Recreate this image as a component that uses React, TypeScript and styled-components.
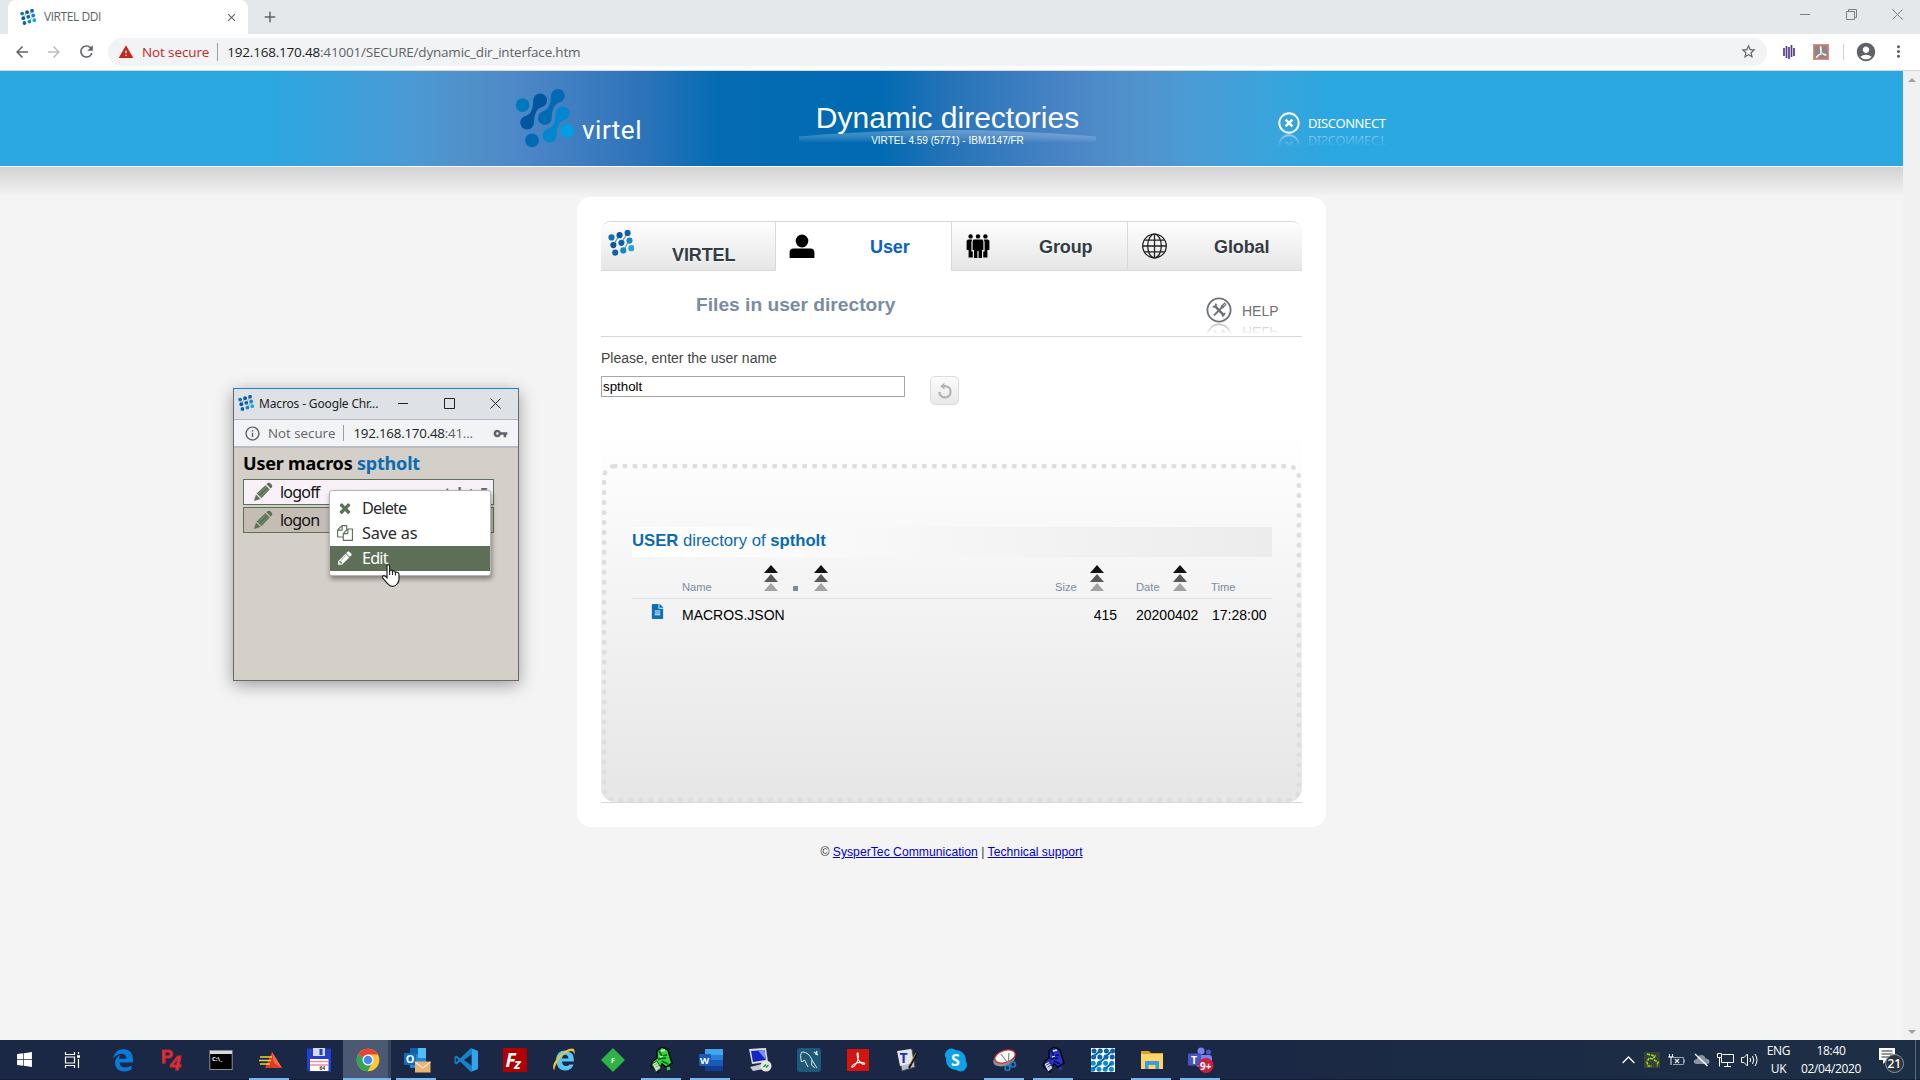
import React from "react";
import styled, { createGlobalStyle, css } from "styled-components";
import {
  MdArrowBack,
  MdArrowForward,
  MdRefresh,
  MdStarBorder,
  MdVpnKey,
  MdMoreVert,
  MdWarning,
  MdInfoOutline,
  MdAccountCircle,
  MdClose,
  MdAdd,
} from "react-icons/md";
import { FaFileAlt, FaWindows } from "react-icons/fa";

const sans = `"Liberation Sans", Arial, sans-serif`;
const ui = `"Open Sans", "Noto Sans", sans-serif`;
const noto = `"Noto Sans", "Open Sans", sans-serif`;

const GlobalStyle = createGlobalStyle`
  * { box-sizing: border-box; }
  body { margin: 0; background: #f5f5f5; font-family: ${sans}; overflow: hidden; }
  svg { display: block; flex: none; }
`;

const Screen = styled.div`
  position: relative;
  display: flex;
  flex-direction: column;
  width: 1920px;
  height: 1080px;
  overflow: hidden;
`;

/* ---------- Shared logo ---------- */

function Link({ x, y, fill }: { x: number; y: number; fill: string }) {
  return (
    <g fill={fill} transform={`translate(${x} ${y})`}>
      <circle r="7" />
      <circle cx="13.3" cy="-22.5" r="7" />
      <path d="M-1 -6.9 Q6 -9 6.3 -22.5 L14 -15.6 Q7 -13 7 0.5 Z" />
    </g>
  );
}

function VirtelMark({ size }: { size: number }) {
  return (
    <svg width={size} height={size} viewBox="15 8 61 61">
      <circle cx="22.7" cy="25.3" r="7" fill="#0078be" />
      <Link x={27.3} y={43.2} fill="#0057a0" />
      <Link x={45.3} y={38.5} fill="#006ab3" />
      <Link x={50.2} y={56.3} fill="#0087cf" />
      <circle cx="32.3" cy="61.3" r="7" fill="#006ab3" />
      <circle cx="68" cy="51.7" r="7" fill="#009ee3" />
    </svg>
  );
}

function DotMark({ size }: { size: number }) {
  const colors = ["#0a74bb", "#0a56a0", "#0c62ad", "#0a56a0", "#0c62ad", "#1785cc", "#0c62ad", "#1785cc", "#22a1e4"];
  return (
    <svg width={size} height={size} viewBox="13 6 62 63">
      <path d="M26 42L40 18M45 37L60 13M50 55L64 31" stroke="#5a9fd6" strokeWidth="3" />
      {colors.map((c, i) => {
        const col = i % 3;
        const row = Math.floor(i / 3);
        return (
          <ellipse key={i} cx={21 + col * 19.5 + row * 4.5} cy={24 - col * 5.5 + row * 18.5} rx="7.4" ry="7.6" fill={c} />
        );
      })}
    </svg>
  );
}

/* ---------- Browser chrome ---------- */

const TabStrip = styled.div`
  display: flex;
  align-items: flex-end;
  height: 34px;
  padding-left: 8px;
  background: #e4e8eb;
`;

const BrowserTab = styled.div`
  display: flex;
  align-items: center;
  width: 240px;
  height: 34px;
  padding: 0 10px 0 12px;
  border-radius: 8px 8px 0 0;
  background: #fff;
  color: #5f6368;
  font: 12px/34px ${ui};
  letter-spacing: -0.45px;
  span { flex: 1; padding-left: 8px; }
`;

const NewTab = styled.div`
  display: flex;
  align-items: center;
  height: 34px;
  margin-left: 13px;
  color: #5f6368;
`;

const WindowButtons = styled.div`
  display: flex;
  align-items: center;
  gap: 35px;
  height: 28px;
  margin-left: auto;
  margin-bottom: 6px;
  padding-right: 17px;
`;

const Toolbar = styled.div`
  display: flex;
  align-items: center;
  height: 37px;
  padding: 0 12px 1px 13px;
  border-bottom: 1px solid #d5d8dc;
  background: #fff;
  color: #5f6368;
`;

const NavButtons = styled.div`
  display: flex;
  align-items: center;
  gap: 14px;
  width: 95px;
  svg:nth-child(2) { color: #bbbdc0; }
`;

const Omnibox = styled.div`
  display: flex;
  align-items: center;
  width: 1659px;
  height: 28px;
  padding: 0 10px;
  border-radius: 14px;
  background: #f1f3f4;
  font: 13.5px/28px ${ui};
`;

const NotSecure = styled.span`
  margin-left: 8px;
  color: #c5281c;
  letter-spacing: -0.12px;
`;

const Divider = styled.i<{ $h?: number; $c?: string }>`
  width: 1px;
  height: ${(p) => p.$h ?? 18}px;
  background: ${(p) => p.$c ?? "#9a9da1"};
`;

const Url = styled.span<{ $gap?: number }>`
  flex: 1;
  margin-left: ${(p) => p.$gap ?? 9}px;
  color: #5f6368;
  letter-spacing: -0.2px;
  b { font-weight: 400; color: #202124; }
`;

const Extensions = styled.div`
  display: flex;
  align-items: center;
  margin-left: auto;
`;

const Spacer = styled.i<{ $w: number }>`
  width: ${(p) => p.$w}px;
  flex: none;
`;

/* ---------- Page ---------- */

const Viewport = styled.div`
  display: flex;
  height: 969px;
`;

const Page = styled.main`
  display: flex;
  flex-direction: column;
  align-items: flex-start;
  width: 1903px;
  background: #f4f4f4;
`;

const Scrollbar = styled.div`
  display: flex;
  flex-direction: column;
  justify-content: space-between;
  align-items: center;
  width: 17px;
  padding: 7px 0 6px;
  background: #f1f1f1;
`;

const Arrow = styled.i<{ $down?: boolean }>`
  border: 4px solid transparent;
  ${(p) =>
    p.$down
      ? css`border-top-color: #a0a0a0; border-bottom: 0;`
      : css`border-bottom-color: #a0a0a0; border-top: 0;`}
`;

const Banner = styled.header`
  display: flex;
  align-items: flex-start;
  width: 100%;
  height: 96px;
  padding-left: 515px;
  border-bottom: 1px solid #fff;
  background: linear-gradient(90deg, #2ba7e1 0, #2ba7e1 270px, #4b9ad5 410px, #5090c9 470px, #4d87c7 520px,
    #2e73ba 640px, #056cb3 715px, #016ab2 880px, #2673b8 950px, #4a85c6 1070px, #5191cb 1130px, #4b9bd5 1190px,
    #3aa4dc 1270px, #2ba7e1 1330px);
`;

const Logo = styled.div`
  display: flex;
  width: 284px;
  padding-top: 17px;
  svg { margin-right: 7px; }
  span {
    padding-top: 27px;
    color: #fff;
    font: 400 26px/30px Roboto, sans-serif;
    letter-spacing: 0.5px;
  }
`;

const TitleBlock = styled.div`
  position: relative;
  width: 297px;
  padding-top: 29px;
  color: #fff;
  text-align: center;
  svg { position: absolute; left: 0; top: 59px; }
`;

const Title = styled.h1`
  position: relative;
  margin: 0;
  font: 30px/35px ${sans};
`;

const SubTitle = styled.div`
  position: relative;
  font: 10px/12px ${sans};
`;

const ActionLink = styled.div<{ $c: string; $h: number }>`
  display: flex;
  align-items: center;
  height: ${(p) => p.$h}px;
  color: ${(p) => p.$c};
`;

const Reflected = styled.div<{ $h: number }>`
  display: flex;
  align-items: flex-end;
  height: ${(p) => p.$h}px;
  overflow: hidden;
  transform: scaleY(-1);
  opacity: 0.45;
  mask-image: linear-gradient(0deg, #000 0%, transparent 90%);
  ${ActionLink} span { padding-top: 8px; }
`;

const Disconnect = styled.div`
  margin-left: 182px;
  padding-top: 41px;
  span {
    margin-left: 8px;
    font: 13px/22px ${noto};
    letter-spacing: -0.4px;
  }
`;

const Shade = styled.div`
  width: 100%;
  height: 30px;
  background: linear-gradient(#d3d3d3, #dedede 35%, #f4f4f4);
`;

const Card = styled.section`
  display: flex;
  flex-direction: column;
  width: 749px;
  height: 630px;
  margin-left: 577px;
  padding: 24px 24px 0;
  border-radius: 14px;
  background: #fff;
`;

const Tabs = styled.nav`
  display: grid;
  grid-template-columns: 175px 176px 176px 174px;
  height: 50px;
  border-top: 1px solid #d9d9d9;
  border-radius: 10px 10px 0 0;
  overflow: hidden;
`;

const Tab = styled.div<{ $active?: boolean; $pad: number; $gap: number; $drop?: number }>`
  display: flex;
  padding-left: ${(p) => p.$pad}px;
  border-bottom: 1px solid #d9d9d9;
  border-right: 1px solid #d9d9d9;
  background: linear-gradient(#fefefe, #e6e6e6);
  color: #333b44;
  &:last-child { border-right: 0; }
  ${(p) => p.$active && css`background: #fff; border-bottom-color: #fff; color: #0a62c9;`}
  svg { margin-top: ${(p) => (p.$drop ? 8 : 11)}px; }
  span {
    margin-left: ${(p) => p.$gap}px;
    padding-top: ${(p) => 15 + (p.$drop ?? 0)}px;
    font: bold 18px/20px ${sans};
    letter-spacing: -0.1px;
    text-shadow: 0 1px 0 #fff;
  }
`;

const Heading = styled.div`
  display: flex;
  height: 66px;
  border-bottom: 1px solid #d9d9d9;
`;

const HeadingText = styled.h2`
  width: 605px;
  margin: 0;
  padding: 21px 0 0 95px;
  color: #7a8ca3;
  font: bold 19.2px/25px ${sans};
`;

const Help = styled.div`
  padding-top: 26px;
  span {
    margin-left: 10px;
    font: 14px/26px ${sans};
    padding-top: 2px;
  }
`;

const Form = styled.div`
  display: flex;
  height: 93px;
  padding-top: 12px;
`;

const FieldColumn = styled.label`
  display: flex;
  flex-direction: column;
  width: 304px;
  color: #444;
  font: 14px/18px ${sans};
`;

const Field = styled.div`
  height: 21px;
  margin-top: 9px;
  padding-left: 1px;
  border: 1px solid #a6a6a6;
  background: #fff;
  color: #000;
  font: 13.33px/19px ${sans};
`;

const RefreshButton = styled.div`
  display: flex;
  align-items: center;
  justify-content: center;
  width: 29px;
  height: 29px;
  margin: 27px 0 0 25px;
  border: 1px solid #dcdcdc;
  border-radius: 5px;
  background: linear-gradient(#fcfcfc, #e8e8e8);
`;

const Panel = styled.div`
  border-bottom: 1px solid #d9d9d9;
`;

const PanelFill = styled.div`
  display: flex;
  flex-direction: column;
  height: 372px;
  border-radius: 0 0 14px 14px;
  background: linear-gradient(#fff, #fdfdfd 8%, #e6e6e6);
`;

const Dotted = styled.div`
  width: 699px;
  height: 338px;
  margin: 34px 0 0 1px;
  padding: 58px 24px 0 25px;
  border: 5px dotted #dedede;
  border-radius: 13px;
`;

const DirectoryTitle = styled.h3`
  margin: 0;
  height: 30px;
  background: linear-gradient(90deg, #fff, #ececec);
  color: #0b6ab0;
  font: 16.7px/28px ${sans};
`;

const FileGrid = styled.div`
  display: grid;
  grid-template-columns: 50px 82px 28px 263px 35px 46px 37px 38px 1fr;
  align-items: end;
  height: 42px;
  padding-bottom: 4px;
  border-bottom: 1px solid #e2e2e2;
  color: #7a8ca3;
  font: 11.2px/14px ${sans};
`;

const FileRow = styled.div`
  display: grid;
  grid-template-columns: 19px 31px 396px 39px 19px 75px 1fr;
  height: 34px;
  color: #000;
  font: 14px/33px ${sans};
  svg { margin: 5px 0 0 -1px; color: #0a70ba; }
  span:nth-child(4) { text-align: right; }
  span:nth-child(7) { padding-left: 1px; }
`;

const SortStack = styled.div`
  display: flex;
  flex-direction: column;
  gap: 1px;
  margin-bottom: 3px;
  i {
    width: 14px;
    height: 8px;
    clip-path: polygon(50% 0, 100% 100%, 0 100%);
    background: #111;
  }
  i:nth-child(2) { background: #595959; }
  i:nth-child(3) { background: #a3a3a3; }
`;

const Dot = styled.i`
  width: 5px;
  height: 5px;
  margin-bottom: 3px;
  background: #7a8ca3;
`;

const DotCell = styled.div`
  display: flex;
  align-items: flex-end;
  gap: 16px;
  padding-left: 1px;
`;

const Footer = styled.footer`
  width: 1903px;
  padding: 17px 0 0 0;
  color: #333;
  font: 12.16px/16px ${sans};
  letter-spacing: 0.02px;
  text-align: center;
  a { color: #0000d8; text-decoration: underline; }
`;

/* ---------- Popup window ---------- */

const Popup = styled.aside`
  position: absolute;
  left: 233px;
  top: 388px;
  width: 286px;
  height: 293px;
  display: flex;
  flex-direction: column;
  border: 1px solid #67696b;
  border-top-color: #1a84d8;
  background: #d4cfc8;
  box-shadow: 0 4px 16px rgba(0, 0, 0, 0.36);
`;

const PopupTitle = styled.div`
  display: flex;
  align-items: center;
  height: 31px;
  padding: 0 0 2px 4px;
  border-bottom: 1px solid #b3b6bb;
  background: #dee1e6;
  color: #222;
  font: 12px/28px ${noto};
  letter-spacing: -0.15px;
  span { width: 144px; padding: 1px 0 0 5px; white-space: nowrap; }
`;

const PopupAddress = styled.div`
  display: flex;
  align-items: center;
  height: 28px;
  padding-left: 10px;
  border-bottom: 2px solid #b9bdc3;
  background: #f1f3f4;
  color: #5f6368;
  font: 13.3px/26px ${ui};
`;

const PopupBody = styled.div`
  padding: 1px 24px 0 9px;
`;

const PopupHeading = styled.div`
  height: 30px;
  color: #000;
  font: bold 18px/28px ${noto};
  letter-spacing: -0.2px;
  white-space: nowrap;
  span { color: #0b6cb3; }
`;

const MacroRow = styled.div<{ $dim?: boolean }>`
  display: flex;
  align-items: center;
  height: 26px;
  margin-bottom: 2px;
  padding: 0 5px 0 9px;
  border: 1px solid #5d7157;
  background: ${(p) => (p.$dim ? "#c3bdb3" : "#f8f2f8")};
  color: #111;
  font: 16px/24px ${noto};
  letter-spacing: -0.8px;
  span { flex: 1; padding-left: 7px; }
  em { color: #666; font: bold 14px/23px ${noto}; letter-spacing: 0.25px; word-spacing: 1px; }
`;

const Menu = styled.div`
  position: absolute;
  left: 95px;
  top: 101px;
  width: 162px;
  height: 86px;
  padding-top: 4px;
  border: 1px solid #b5b5b5;
  border-radius: 3px;
  background: #fff;
  box-shadow: 1px 3px 5px rgba(0, 0, 0, 0.4);
`;

const MenuItem = styled.div<{ $hot?: boolean; $tight?: boolean }>`
  display: flex;
  align-items: center;
  height: 25.4px;
  padding-left: 7px;
  background: ${(p) => (p.$hot ? "#5d7057" : "transparent")};
  color: ${(p) => (p.$hot ? "#fff" : "#2b2b2b")};
  font: 16.3px/25px ${noto};
  letter-spacing: ${(p) => (p.$tight ? -0.85 : -0.2)}px;
  svg { margin-right: 9px; color: ${(p) => (p.$hot ? "#fff" : "#5d7157")}; }
`;

const MenuText = styled.span`
  padding-top: 1px;
`;

const Pointer = styled.div`
  position: absolute;
  left: 148px;
  top: 175px;
`;

/* ---------- Taskbar ---------- */

const Taskbar = styled.div`
  display: flex;
  height: 40px;
  background: linear-gradient(90deg, #1a2745, #1a2745 60%, #1d2f45);
  border-bottom: 1px solid #131d35;
`;

const StartCell = styled.div`
  display: flex;
  align-items: center;
  justify-content: center;
  width: 48px;
  color: #fff;
`;

const AppCell = styled.div<{ $open?: boolean; $active?: boolean }>`
  display: flex;
  align-items: center;
  justify-content: center;
  width: 49px;
  height: 40px;
  ${(p) =>
    (p.$open || p.$active) &&
    css`
      background-image: linear-gradient(#76b9ed, #76b9ed)${p.$active ? ", linear-gradient(90deg, #4c5972 45px, #2f3c56 45px, #3c4962 48px)" : ""};
      background-size: ${p.$active ? "48px" : "40px"} 2px, 48px 40px;
      background-position: ${p.$active ? "0" : "4px"} 38px, 0 0;
      background-repeat: no-repeat;
    `}
`;

const Tray = styled.div`
  display: flex;
  align-items: center;
  margin-left: auto;
  color: #fff;
  text-align: center;
`;

const TrayText = styled.div<{ $w: number }>`
  width: ${(p) => p.$w}px;
  font: 12px/18px ${ui};
  letter-spacing: -0.35px;
`;

/* ---------- Drawings ---------- */

const PENCIL =
  "M491 1536l91-91-235-235-91 91v107h128v128h107zm523-928q0-22-22-22-10 0-17 7l-542 542q-7 7-7 17 0 22 22 22 10 0 17-7l542-542q7-7 7-17zm-54-192l416 416-832 832h-416v-416zm683 96q0 53-37 90l-166 166-416-416 166-165q36-38 90-38 53 0 91 38l235 234q37 39 37 91z";
const TIMES =
  "M1490 1322q0 40-28 68l-136 136q-28 28-68 28t-68-28l-294-294-294 294q-28 28-68 28t-68-28l-136-136q-28-28-28-68t28-68l294-294-294-294q-28-28-28-68t28-68l136-136q28-28 68-28t68 28l294 294 294-294q28-28 68-28t68 28l136 136q28 28 28 68t-28 68l-294 294 294 294q28 28 28 68z";
const FILES =
  "M1696 384q40 0 68 28t28 68v1216q0 40-28 68t-68 28h-960q-40 0-68-28t-28-68v-288h-544q-40 0-68-28t-28-68v-672q0-40 20-88t48-76l408-408q28-28 76-48t88-20h416q40 0 68 28t28 68v328q68-40 128-40h416zm-544 213l-299 299h299v-299zm-640-384l-299 299h299v-299zm196 647l316-316v-416h-384v416q0 40-28 68t-68 28h-416v640h512v-256q0-40 20-88t48-76zm956 804v-1152h-384v416q0 40-28 68t-68 28h-416v640h896z";

function Glyph({ d }: { d: string }) {
  return (
    <svg width="16" height="16" viewBox="0 0 1792 1792" fill="currentColor">
      <path d={d} />
    </svg>
  );
}

function FatPencil() {
  return (
    <svg width="20" height="20" viewBox="0 0 20 20">
      <path d="M1 19L3 12.5L7.5 17Z" fill="#5d7157" />
      <path d="M3.6 11.4L12.4 3.2L16.8 7.6L8.4 16.2Z" fill="#5d7157" />
      <path d="M13.4 2.3L15.2 0.8Q16.4 0.2 18 1.8Q19.8 3.6 19.2 4.9L17.7 6.6Z" fill="#5d7157" />
      <path d="M5 12.4L13.6 4.2M7.2 14.8L15.8 6.6" stroke="#8fa089" strokeWidth=".8" />
    </svg>
  );
}

function CrossCircle() {
  return (
    <svg width="22" height="22" viewBox="0 0 22 22" fill="none" stroke="#fff">
      <circle cx="11" cy="11" r="9.7" strokeWidth="1.9" />
      <path d="M7.6 7.6L14.4 14.4M14.4 7.6L7.6 14.4" strokeWidth="2.5" />
    </svg>
  );
}

function ToolsCircle() {
  return (
    <svg width="26" height="26" viewBox="0 0 26 26" fill="none" stroke="#6d7278">
      <circle cx="13" cy="13" r="11.6" strokeWidth="1.8" />
      <path d="M8.6 8.6L18.2 18.6" strokeWidth="2.6" />
      <path d="M17.6 8.6L8 18.4" strokeWidth="2" />
      <path d="M6.6 9.6L9.6 9.8L10 6.6" strokeWidth="1.8" />
      <path d="M15.4 9.2L18.6 6.2L19.8 7.6L16.8 10.8Z" strokeWidth="1.2" />
      <path d="M16 19.4L19.2 16" strokeWidth="1.6" />
    </svg>
  );
}

const UserIcon = () => (
  <svg width="26" height="26" viewBox="0 0 26 26">
    <ellipse cx="13" cy="8" rx="6.3" ry="6.4" />
    <path d="M.6 25V19.500Q.6 15.600 4.600 15.600H21.400Q25.400 15.600 25.400 19.500V25Z" />
  </svg>
);

const GroupIcon = () => (
  <svg width="24" height="26" viewBox="0 0 24 26">
    {[4.6, 12, 19.4].map((x) => (
      <circle key={x} cx={x} cy="3.4" r="2.2" />
    ))}
    <path d="M7.6 6.4H16.4L17.4 8V17H16V25H12.6V18H11.4V25H8V17H6.6V8Z" />
    <path d="M.6 7.8L2 6.4H6.2L5.4 9V18.4H6.8V24.4H2.6V17H.6Z" />
    <path d="M23.4 7.8L22 6.4H17.8L18.6 9V18.4H17.2V24.4H21.4V17H23.4Z" />
  </svg>
);

const GlobeIcon = () => (
  <svg width="27" height="27" viewBox="0 0 27 27" fill="none" stroke="#222" strokeWidth="1.3">
    <circle cx="13.5" cy="13" r="11.8" />
    <ellipse cx="13.5" cy="13" rx="6.8" ry="11.8" />
    <path d="M13.5 1.2V24.8M1.7 13H25.3M3.4 7.1H23.6M3.4 18.9H23.6" />
  </svg>
);

function Sort() {
  return (
    <SortStack>
      <i />
      <i />
      <i />
    </SortStack>
  );
}

/* Taskbar application icons, drawn on a 24-unit grid */
const T = ({ children }: { children: React.ReactNode }) => (
  <svg width="24" height="24" viewBox="0 0 24 24" fontFamily="Open Sans, sans-serif" fontWeight="700">
    {children}
  </svg>
);

const edge = (
  <T>
    <path
      d="M2 11Q4 1 12.5 1Q21.500 1 22 11.500V14.500H8.500Q9 19.500 14 19.500Q18 19.500 20.500 17.500V21.500Q17 23.500 13 23.500Q4 23 4 14.500Q4.500 9 9.500 7Q8 9 8 10.700H15.500Q15 5.800 10.500 5.800Q5 6 2 11Z"
      fill="#0a7ad8"
    />
  </T>
);
const p4 = (
  <svg width="26" height="28" viewBox="0 -1 26 28" fontFamily="Liberation Sans, sans-serif" fontWeight="700">
    <text x="2" y="16" fontSize="18" fill="#e2333b" stroke="#c02830" strokeWidth="1">P</text>
    <text x="11" y="23" fontSize="20" fontStyle="italic" fill="#e2333b" stroke="#c02830" strokeWidth="1">4</text>
  </svg>
);
const cmd = (
  <T>
    <rect x=".8" y="2.500" width="22.400" height="19" fill="#000" stroke="#8d8d8d" />
    <rect x="1" y="3" width="22" height="3" fill="#d8d8d8" />
    <text x="3" y="13" fontSize="6" fill="#fff">C:\_</text>
  </T>
);
const fastArrow = (
  <T>
    <path d="M14 4L24 20H7Z" fill="#e23b24" />
    <path d="M14 4L24 20L16 15Z" fill="#f0694d" />
    <path d="M2 9H14M1 12.500H13M2 16H12" stroke="#f1d72c" strokeWidth="1.400" />
  </T>
);
const floppy = (
  <T>
    <path d="M0 .5H24V23.500H2L0 21.500Z" fill="#233fd0" />
    <rect x="6" y="0" width="12" height="8" fill="#d7dbe8" />
    <rect x="12.500" y="1" width="3" height="6" fill="#233fd0" />
    <rect x="3" y="11" width="18.500" height="12" fill="#fff" />
    <path d="M3 13.500H21M3 17H21" stroke="#ee8f9c" strokeWidth="1.300" />
    <text x="12.500" y="22" fontSize="5" fill="#333">64</text>
  </T>
);
const chrome = (
  <T>
    <circle cx="12" cy="12" r="11.300" fill="#fcc934" />
    <path d="M12 12L2.200 6.300A11.300 11.300 0 0 1 21.800 6.500H12Z" fill="#e94335" />
    <path d="M12 12L2.200 6.300A11.300 11.300 0 0 0 11.500 23.300L16.500 14.500Z" fill="#34a353" />
    <circle cx="12" cy="12" r="5.500" fill="#fff" />
    <circle cx="12" cy="12" r="4.300" fill="#4688f1" />
  </T>
);
const outlook = (
  <svg width="28" height="26" viewBox="0 0 28 26" fontFamily="Open Sans, sans-serif" fontWeight="700">
    <rect x="7" y="1" width="16" height="20" rx="1" fill="#1e88d6" />
    <rect x="15" y="1" width="8" height="10" fill="#50c0f2" />
    <rect x="7" y="1" width="8" height="6" fill="#0d62ad" />
    <rect x="1" y="6" width="12" height="12" rx="1" fill="#0f6cbd" />
    <text x="2.700" y="16" fontSize="11" fill="#fff">O</text>
    <rect x="12" y="14.500" width="15.500" height="11" fill="#edb374" />
    <path d="M12 15L19.800 21L27.500 15" fill="none" stroke="#fff" strokeWidth="1" />
  </svg>
);
const vscode = (
  <T>
    <path d="M17 0L24 3V21L17 24L6 13.500L2.500 16.500L.5 15.300V8.700L2.500 7.500L6 10.500Z" fill="#1583ca" />
    <path d="M17.500 6.500V17.500L10 12Z" fill="#1a2745" />
    <path d="M18 1L24 3V21L18 23Z" fill="#32a5ec" />
    <path d="M1.800 9.500L4.500 12L1.800 14.500Z" fill="#1a2745" />
  </T>
);
const filezilla = (
  <T>
    <rect width="24" height="24" fill="#b20000" />
    <text x="2.500" y="19" fontSize="19" fontStyle="italic" fill="#fff">F</text>
    <text x="11" y="21" fontSize="15" fontStyle="italic" fill="#fff">z</text>
  </T>
);
const ie = (
  <T>
    <path d="M4 12Q4.500 2.500 13 2.500Q22 3 22 13.500H10Q10.500 18 14 18Q16.500 18 17.500 16.500H21.600Q19.500 22.500 13 22.500Q4.500 22 4 12ZM10 10.500H16.500Q16 6.700 13.300 6.700Q10.600 6.700 10 10.500Z" fill="#5cc4f3" />
    <path d="M2.500 22.500Q-1.500 19 5.500 9.500Q14 .2 20.500 .5Q24 1.500 22 7Q22.300 2.800 18.500 3Q12 4.500 7 11.500Q2 19 2.500 22.500Z" fill="#f0c22e" />
  </T>
);
const diamond = (
  <T>
    <path d="M12 0L24 12L12 24L0 12Z" fill="#2db346" />
    <text x="10" y="15" fontSize="7" fill="#fff">F</text>
  </T>
);
const pixelTruck = (main: string, dark: string) => (
  <svg width="24" height="26" viewBox="0 0 24 26">
    <path d="M7 4L12 0L18 3L20 10L22 16L16 20L12 17L8 25L1 19L3 14L7 11Z" fill={main} stroke="#050608" strokeWidth="1.500" />
    <path d="M9 4L12 9L17 8M8 12L16 11M12 14L18 17" stroke={dark} strokeWidth="1.500" fill="none" />
    <path d="M2 17L7 14L11 21L6 25Z" fill="#cfd6cf" stroke={dark} strokeWidth=".9" />
    <path d="M4.500 18L8 16M6 20L9 18" stroke={main} strokeWidth="1" />
    <path d="M11 4L15 3M10 10L13 9" stroke="#e8f4e8" strokeWidth="1.300" />
    <path d="M17 22L20 21" stroke={main} strokeWidth="3" />
  </svg>
);
const word = (
  <T>
    <rect x="6" y="1" width="18" height="22" rx="1" fill="#2b7cd3" />
    <rect x="6" y="1" width="18" height="6" fill="#41a5ee" />
    <rect x="6" y="12" width="18" height="6" fill="#185abd" />
    <rect x="6" y="18" width="18" height="5" fill="#103f91" />
    <rect x="0" y="6" width="12" height="12" rx="1" fill="#185abd" />
    <text x="1" y="15.500" fontSize="9.500" fill="#fff">W</text>
  </T>
);
const remote = (
  <T>
    <path d="M1 1L18 0L20 14L4 16Z" fill="#d9dde4" />
    <path d="M3 3L16.500 2L18 12L5 14Z" fill="#1626c4" />
    <path d="M10 2.500L16.500 2L18 12Z" fill="#7d90f0" />
    <path d="M2 19L14 16L16 21L5 23Z" fill="#c6cad2" />
    <circle cx="18" cy="18" r="5.500" fill="#e4e8e4" />
    <path d="M15.500 19L18 16.500M18 19.500L20.500 17" stroke="#2d8a3b" strokeWidth="1.500" />
  </T>
);
const mysql = (
  <T>
    <rect width="24" height="24" rx="3" fill="#1f5878" />
    <path d="M4.500 14Q2.500 6 5 4Q12 4 15 12L20 20M5 14L7.500 12L11 19M15 12L14.500 17L18 20" fill="none" stroke="#dce9f0" strokeWidth="1" />
    <path d="M17 4L21 7M20 3L19 7" stroke="#dce9f0" strokeWidth="1.400" />
  </T>
);
const acrobatShape = "M12 3.500Q13.500 9 11 14Q8 20 5 20.500Q3 19.500 8 16.500Q14 13.500 19.500 15.500Q21 17 17.500 17Q11 13 10.800 5Q11 3 12 3.500";
const acrobat = (
  <T>
    <rect x="1" y="1" width="22" height="22" fill="#d3140f" />
    <path d={acrobatShape} fill="none" stroke="#fff" strokeWidth="1.300" transform="translate(2 2) scale(.84)" />
  </T>
);
const textpad = (
  <T>
    <path d="M3 4L17 1L20 19L7 23Z" fill="#b9bcc4" stroke="#4a4c52" />
    <path d="M2 3L16 1L18 15L5 18Z" fill="#e4e5e9" />
    <text x="4.500" y="15" fontSize="14" fill="#1d2fbf">T</text>
    <path d="M22 5L14 20" stroke="#111" strokeWidth="2" />
    <path d="M21 5L15 16" stroke="#c5a43a" strokeWidth=".8" />
  </T>
);
const skype = (
  <T>
    <circle cx="12" cy="12" r="10" fill="#0da2ea" />
    <circle cx="7.500" cy="7" r="6.500" fill="#0da2ea" />
    <circle cx="16.500" cy="17" r="6.500" fill="#0da2ea" />
    <text x="7" y="18" fontSize="16" fill="#fff">S</text>
  </T>
);
const snip = (
  <T>
    <ellipse cx="11" cy="12" rx="11" ry="6" fill="#8e9299" transform="rotate(-14 11 12)" />
    <ellipse cx="12" cy="8.500" rx="10.500" ry="6" fill="#fff" stroke="#dc2f2f" strokeWidth="1.300" transform="rotate(-18 12 8.500)" />
    <path d="M8 6L17 18M16 5L15 18" stroke="#888" strokeWidth="1.200" />
    <circle cx="14.500" cy="20" r="2.500" fill="none" stroke="#1d7fc5" strokeWidth="1.600" />
    <circle cx="20" cy="16.500" r="2.500" fill="none" stroke="#1d7fc5" strokeWidth="1.600" />
  </T>
);
const virtelTile = (
  <T>
    <rect width="24" height="24" fill="#fff" />
    {[0, 1, 2, 3].flatMap((r) =>
      [0, 1, 2, 3].map((c) => (
        <circle key={`${r}${c}`} cx={3 + c * 6.2 - r * 0.4} cy={3 + r * 6.1} r="2.500" fill={r > 1 ? "#0f8ad0" : "#0b62ac"} />
      ))
    )}
    <path d="M2 9L9 3M14 9L21 3M2 21L9 15M14 21L21 15M8 15L15 9" stroke="#0b6cb8" strokeWidth="2.200" />
  </T>
);
const explorer = (
  <T>
    <path d="M1 3H9L11 5H23V21H1Z" fill="#e0a21b" />
    <rect x="1" y="6" width="22" height="15" fill="#fbd567" />
    <path d="M5 21V13H19V21H15.500V17H8.500V21Z" fill="#3e9be0" />
  </T>
);
const teams = (
  <svg width="26" height="26" viewBox="0 0 26 26" fontFamily="Open Sans, sans-serif" fontWeight="700">
    <circle cx="13" cy="4" r="3.500" fill="#7b83eb" />
    <circle cx="20.500" cy="5" r="2.500" fill="#5059c9" />
    <rect x="8" y="8" width="16" height="12" rx="3" fill="#7b83eb" />
    <rect x="0" y="6.500" width="13" height="12" rx="1" fill="#4b53bc" />
    <text x="3" y="16.500" fontSize="10.500" fill="#fff">T</text>
    <circle cx="18" cy="18.500" r="7.500" fill="#cc1f3d" />
    <text x="12" y="22.500" fontSize="10" fill="#fff">9+</text>
  </svg>
);

const apps: { icon: React.ReactNode; open?: boolean; active?: boolean }[] = [
  { icon: edge },
  { icon: p4 },
  { icon: cmd },
  { icon: fastArrow, open: true },
  { icon: floppy },
  { icon: chrome, active: true },
  { icon: outlook, open: true },
  { icon: vscode },
  { icon: filezilla },
  { icon: ie },
  { icon: diamond },
  { icon: pixelTruck("#2fd83c", "#0c5a14"), open: true },
  { icon: word, open: true },
  { icon: remote },
  { icon: mysql },
  { icon: acrobat },
  { icon: textpad },
  { icon: skype },
  { icon: snip, open: true },
  { icon: pixelTruck("#2633c9", "#0a0f5c"), open: true },
  { icon: virtelTile },
  { icon: explorer, open: true },
  { icon: teams, open: true },
];

const tabs = [
  { label: "VIRTEL", icon: <DotMark size={26} />, pad: 7, gap: 38, drop: 8 },
  { label: "User", icon: <UserIcon />, pad: 13, gap: 55, active: true },
  { label: "Group", icon: <GroupIcon />, pad: 14, gap: 49 },
  { label: "Global", icon: <GlobeIcon />, pad: 13, gap: 46 },
];

export default function App() {
  return (
    <>
      <GlobalStyle />
      <Screen>
        <TabStrip>
          <BrowserTab>
            <DotMark size={16} />
            <span>VIRTEL DDI</span>
            <MdClose size={13} />
          </BrowserTab>
          <NewTab>
            <MdAdd size={18} />
          </NewTab>
          <WindowButtons>
            <svg width="11" height="11" viewBox="0 0 11 11" stroke="#7d8083"><path d="M0 5.500H10" /></svg>
            <svg width="11" height="11" viewBox="0 0 11 11" fill="none" stroke="#7d8083"><path d="M.5 2.500H8.500V10.500H.5ZM2.500 2.500V.5H10.500V8.500H8.500" /></svg>
            <svg width="11" height="11" viewBox="0 0 11 11" stroke="#7d8083"><path d="M.5 .5L10.500 10.500M10.500 .5L.5 10.500" /></svg>
          </WindowButtons>
        </TabStrip>

        <Toolbar>
          <NavButtons>
            <MdArrowBack size={18} />
            <MdArrowForward size={18} />
            <MdRefresh size={19} />
          </NavButtons>
          <Omnibox>
            <MdWarning size={16} color="#c5281c" />
            <NotSecure>Not secure</NotSecure>
            <Spacer $w={8} />
            <Divider />
            <Url>
              <b>192.168.170.48</b>:41001/SECURE/dynamic_dir_interface.htm
            </Url>
            <MdStarBorder size={17} />
          </Omnibox>
          <Extensions>
            <svg width="12" height="14" viewBox="0 0 12 14" stroke="#543a86" strokeWidth="1.700">
              <path d="M1 3V11M3.500 1V13M6 2V14M8.500 0V12M11 3V11" />
            </svg>
            <Spacer $w={18} />
            <svg width="16" height="16" viewBox="0 0 24 24">
              <rect x="1" y="1" width="22" height="22" fill="#8f8585" stroke="#ea8878" strokeWidth="2" />
              <path d={acrobatShape} fill="none" stroke="#fff" strokeWidth="1.500" />
            </svg>
            <Spacer $w={14} />
            <Divider $h={16} $c="#cfd1d4" />
            <Spacer $w={11} />
            <MdAccountCircle size={22} />
            <Spacer $w={12} />
            <MdMoreVert size={19} />
          </Extensions>
        </Toolbar>

        <Viewport>
          <Page>
            <Banner>
              <Logo>
                <VirtelMark size={60} />
                <span>virtel</span>
              </Logo>
              <TitleBlock>
                <svg width="297" height="16" viewBox="0 0 297 16">
                  <defs>
                    <linearGradient id="arc" x1="0" y1="0" x2="0" y2="1">
                      <stop offset="0" stopColor="#fff" stopOpacity=".3" />
                      <stop offset=".45" stopColor="#fff" stopOpacity=".17" />
                      <stop offset=".8" stopColor="#fff" stopOpacity="0" />
                    </linearGradient>
                  </defs>
                  <path d="M0 6.500Q148 -6.500 297 6.500V16H0Z" fill="url(#arc)" />
                </svg>
                <Title>Dynamic directories</Title>
                <SubTitle>VIRTEL 4.59 (5771) - IBM1147/FR</SubTitle>
              </TitleBlock>
              <Disconnect>
                <ActionLink $c="#fff" $h={22}>
                  <CrossCircle />
                  <span>DISCONNECT</span>
                </ActionLink>
                <Reflected $h={14} aria-hidden>
                  <ActionLink $c="#fff" $h={22}>
                    <CrossCircle />
                    <span>DISCONNECT</span>
                  </ActionLink>
                </Reflected>
              </Disconnect>
            </Banner>
            <Shade />
            <Card>
              <Tabs>
                {tabs.map((t) => (
                  <Tab key={t.label} $active={t.active} $pad={t.pad} $gap={t.gap} $drop={t.drop}>
                    {t.icon}
                    <span>{t.label}</span>
                  </Tab>
                ))}
              </Tabs>
              <Heading>
                <HeadingText>Files in user directory</HeadingText>
                <Help>
                  <ActionLink $c="#707070" $h={26}>
                    <ToolsCircle />
                    <span>HELP</span>
                  </ActionLink>
                  <Reflected $h={13} aria-hidden>
                    <ActionLink $c="#707070" $h={26}>
                      <ToolsCircle />
                      <span>HELP</span>
                    </ActionLink>
                  </Reflected>
                </Help>
              </Heading>
              <Form>
                <FieldColumn>
                  Please, enter the user name
                  <Field>sptholt</Field>
                </FieldColumn>
                <RefreshButton>
                  <svg width="16" height="18" viewBox="0 0 16 18" fill="none" stroke="#b3b3b3" strokeWidth="2.300">
                    <path d="M6.500 4.200H8.500A5.600 5.600 0 1 1 2.400 10" />
                    <path d="M7.500 .8V7.600L3.200 4.200Z" fill="#b3b3b3" stroke="none" />
                  </svg>
                </RefreshButton>
              </Form>
              <Panel>
                <PanelFill>
                  <Dotted>
                    <DirectoryTitle>
                      <b>USER</b> directory of <b>sptholt</b>
                    </DirectoryTitle>
                    <FileGrid>
                      <span />
                      <span>Name</span>
                      <Sort />
                      <DotCell>
                        <Dot />
                        <Sort />
                      </DotCell>
                      <span>Size</span>
                      <Sort />
                      <span>Date</span>
                      <Sort />
                      <span>Time</span>
                    </FileGrid>
                    <FileRow>
                      <span />
                      <FaFileAlt size={15} />
                      <span>MACROS.JSON</span>
                      <span>415</span>
                      <span />
                      <span>20200402</span>
                      <span>17:28:00</span>
                    </FileRow>
                  </Dotted>
                </PanelFill>
              </Panel>
            </Card>
            <Footer>
              © <a>SysperTec Communication</a> | <a>Technical support</a>
            </Footer>
          </Page>
          <Scrollbar>
            <Arrow />
            <Arrow $down />
          </Scrollbar>
        </Viewport>

        <Taskbar>
          <StartCell>
            <FaWindows size={17} />
          </StartCell>
          <StartCell>
            <svg width="17" height="16" viewBox="0 0 17 16" fill="none" stroke="#fff" strokeWidth="1.200">
              <path d="M1.500 0V2.500H10.500V0M1.500 5H10.500V11H1.500ZM1.500 16V13.500H10.500V16M14.500 0V2M14.500 7V16" />
              <path d="M13 4.500H16" strokeWidth="2.500" />
            </svg>
          </StartCell>
          <Spacer $w={2} />
          {apps.map((a, i) => (
            <AppCell key={i} $open={a.open} $active={a.active}>
              {a.icon}
            </AppCell>
          ))}
          <Tray>
            <svg width="13" height="8" viewBox="0 0 13 8" fill="none" stroke="#fff" strokeWidth="1.300"><path d="M.6 7L6.500 1L12.400 7" /></svg>
            <Spacer $w={9} />
            <svg width="16" height="16" viewBox="0 0 16 16">
              <rect width="16" height="16" fill="#3b4038" />
              <path d="M3 2L11 4L9 7L5 6L3 10L4 14H8M10 8L14 10L13 14" stroke="#8ee21a" fill="none" strokeWidth="1.500" strokeDasharray="3 1" />
            </svg>
            <Spacer $w={8} />
            <svg width="17" height="14" viewBox="0 0 17 14" fill="none" stroke="#e8ebf0">
              <path d="M1.500 1V4H4.500V1M3 4V12M0 4H6" />
              <path d="M5 4.500H15.500V11.500H5M16.500 6.500V9.500" stroke="#98a1b1" />
              <path d="M7 6L11 10M11 6L7 10" strokeWidth="1.200" />
            </svg>
            <Spacer $w={8} />
            <svg width="17" height="14" viewBox="0 0 17 14">
              <path d="M3 11Q0 10 1 7.500Q2 6 4 6Q5 1.500 9 2Q12 2.500 12.500 5.500Q16 5.500 16.500 8.500Q16.500 11 14 11Z" fill="#8b94a5" />
              <path d="M2 1L14.500 13" stroke="#fff" strokeWidth="1.300" />
            </svg>
            <Spacer $w={7} />
            <svg width="17" height="14" viewBox="0 0 17 14" fill="none" stroke="#fff">
              <path d="M5.500 1.500H16.500V9.500H4.500V5M10.500 9.500V13M7 13.500H14M.5 .5H4.500V4.500H.5ZM2.500 4.500V13.500" />
            </svg>
            <Spacer $w={7} />
            <svg width="18" height="14" viewBox="0 0 18 14" fill="none" stroke="#fff">
              <path d="M.5 4.500H3L6.500 1V13L3 9.500H.5ZM9 5Q10.300 7 9 9M11.500 3Q14 7 11.500 11M14 1Q18 7 14 13" />
            </svg>
            <TrayText $w={39}>
              <div>ENG</div>
              <div>UK</div>
            </TrayText>
            <TrayText $w={66}>
              <div>18:40</div>
              <div>02/04/2020</div>
            </TrayText>
            <Spacer $w={14} />
            <svg width="27" height="26" viewBox="0 0 27 26" fontFamily="Open Sans, sans-serif">
              <path d="M1 1H17V13H9L5 17V13H1Z" fill="#fff" />
              <path d="M3.500 4H14.500M3.500 7H14.500M3.500 10H11" stroke="#1d2f45" />
              <circle cx="16.500" cy="16.500" r="9" fill="#2c3440" stroke="#8d949e" />
              <text x="16.300" y="20.800" fontSize="12" fontWeight="600" fill="#fff" textAnchor="middle">21</text>
            </svg>
            <Spacer $w={10} />
            <Divider $h={40} $c="#5b6879" />
            <Spacer $w={4} />
          </Tray>
        </Taskbar>

        <Popup>
          <PopupTitle>
            <DotMark size={16} />
            <span>Macros - Google Chr...</span>
            <svg width="10" height="11" viewBox="0 0 10 11" stroke="#222"><path d="M0 5.500H10" /></svg>
            <Spacer $w={36} />
            <svg width="11" height="11" viewBox="0 0 11 11" stroke="#222" fill="none"><path d="M.5 .5H10.500V10.500H.5Z" /></svg>
            <Spacer $w={35} />
            <svg width="11" height="11" viewBox="0 0 11 11" stroke="#222"><path d="M.5 .5L10.500 10.500M10.500 .5L.5 10.500" /></svg>
          </PopupTitle>
          <PopupAddress>
            <MdInfoOutline size={17} />
            <Spacer $w={7} />
            Not secure
            <Spacer $w={8} />
            <Divider $h={16} />
            <Url>
              <b>192.168.170.48</b>:41...
            </Url>
            <MdVpnKey size={15} />
            <Spacer $w={10} />
          </PopupAddress>
          <PopupBody>
            <PopupHeading>
              User macros <span>sptholt</span>
            </PopupHeading>
            <MacroRow>
              <FatPencil />
              <span>logoff</span>
              <em>ctrl + F</em>
            </MacroRow>
            <MacroRow $dim>
              <FatPencil />
              <span>logon</span>
            </MacroRow>
          </PopupBody>
          <Menu>
            <MenuItem $tight>
              <Glyph d={TIMES} />
              <MenuText>Delete</MenuText>
            </MenuItem>
            <MenuItem>
              <Glyph d={FILES} />
              <MenuText>Save as</MenuText>
            </MenuItem>
            <MenuItem $hot $tight>
              <Glyph d={PENCIL} />
              <MenuText>Edit</MenuText>
            </MenuItem>
          </Menu>
          <Pointer>
            <svg width="18" height="23" viewBox="0 0 18 23">
              <path
                d="M5 1.800Q5 .6 6.300 .6Q7.600 .6 7.600 1.800V6.500Q10 5.300 10.500 7.300Q12.600 6.300 13.300 8.300Q16.500 7.500 17 10.500V15Q17 18 15.500 19.500Q13.500 22.300 10.500 22.300Q7.500 22.300 6 20L1 14.500Q0 12.500 1.200 11.800Q2.500 11.200 5 13.800Z"
                fill="#fff"
                stroke="#222"
                strokeWidth="1.200"
              />
              <path d="M7.600 6.500V11M10.500 7.300V11M13.400 8.300V11.500" stroke="#222" strokeWidth="1.100" />
            </svg>
          </Pointer>
        </Popup>
      </Screen>
    </>
  );
}
